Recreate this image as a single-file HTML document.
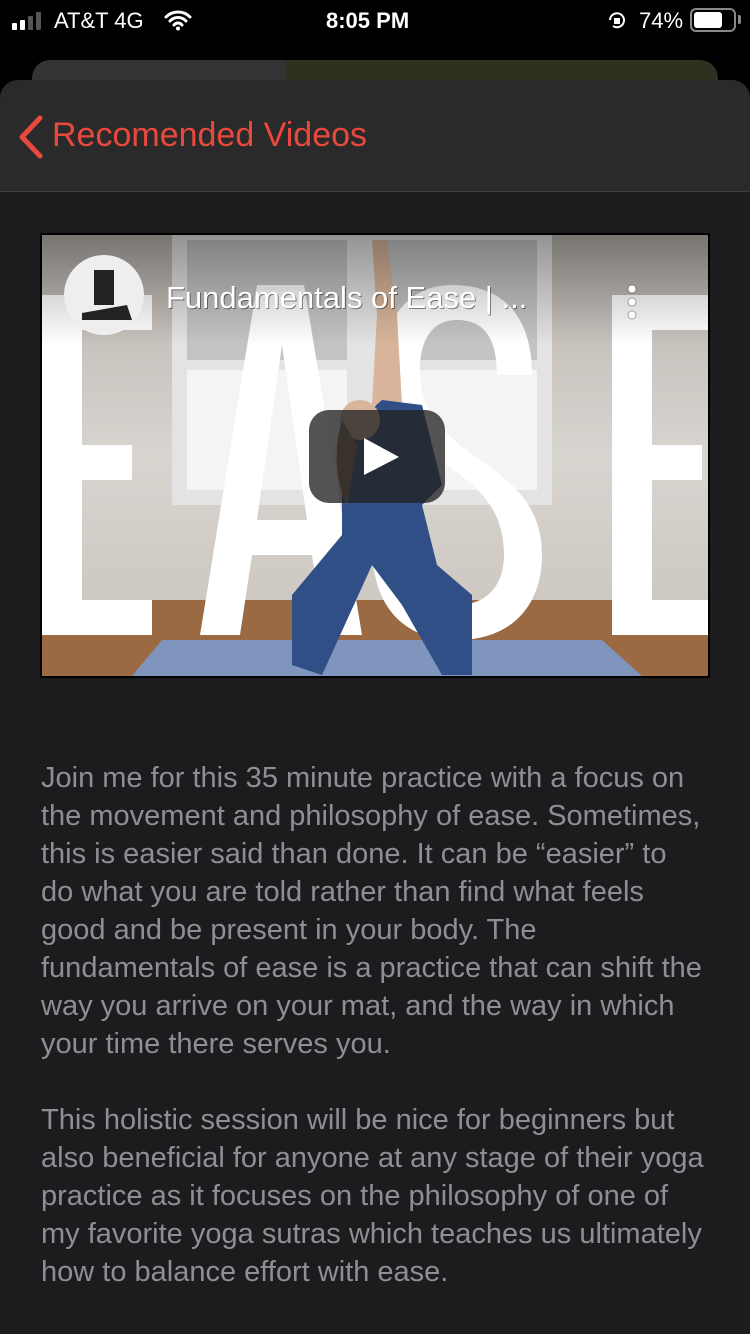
<!DOCTYPE html>
<html><head><meta charset="utf-8"><style>
*{margin:0;padding:0;box-sizing:border-box}
body{width:750px;height:1334px;background:#000;font-family:"Liberation Sans",sans-serif;position:relative;overflow:hidden}
.sb{position:absolute;top:0;left:0;width:750px;height:40px;color:#fff;font-size:22px}
.card{position:absolute;left:32px;top:60px;width:686px;height:60px;border-radius:18px;background:linear-gradient(90deg,#333 0,#333 37%,#2f301f 37%,#2f301f 100%)}
.sheet{position:absolute;left:0;top:80px;width:750px;height:1254px;background:#1c1c1e;border-radius:18px 18px 0 0;overflow:hidden}
.hdr{height:112px;background:#2a2a2a;border-bottom:1px solid #3e3e3e;position:relative}
.hdr .t{position:absolute;left:52px;top:36px;color:#e9493d;font-size:34px}
.txt{position:absolute;left:41px;color:#8f8f93;font-size:29px;line-height:38px;white-space:nowrap}
</style></head><body>
<div class="sb">
 <div style="position:absolute;left:12px;top:12px;display:flex;align-items:flex-end;gap:3px">
  <div style="width:5px;height:7px;background:#fff;border-radius:1px"></div>
  <div style="width:5px;height:10px;background:#fff;border-radius:1px"></div>
  <div style="width:5px;height:14px;background:#555;border-radius:1px"></div>
  <div style="width:5px;height:18px;background:#555;border-radius:1px"></div>
 </div>
 <div style="position:absolute;left:54px;top:8px">AT&amp;T 4G</div>
 <svg style="position:absolute;left:164px;top:9px" width="28" height="22" viewBox="0 0 28 22"><path d="M2 8a17 17 0 0 1 24 0M6 12a11 11 0 0 1 16 0M10 16a5 5 0 0 1 8 0" stroke="#fff" stroke-width="3" fill="none" stroke-linecap="round"/><circle cx="14" cy="19.5" r="2" fill="#fff"/></svg>
 <div style="position:absolute;left:326px;top:8px;font-weight:bold">8:05 PM</div>
 <svg style="position:absolute;left:606px;top:9px" width="22" height="22" viewBox="0 0 22 22"><path d="M4 11a7 7 0 1 1 3 6" stroke="#fff" stroke-width="2" fill="none"/><rect x="8" y="9" width="6" height="6" fill="#fff"/></svg>
 <div style="position:absolute;left:639px;top:8px">74%</div>
 <div style="position:absolute;left:690px;top:8px;width:46px;height:24px;border:2px solid #888;border-radius:6px;padding:2px"><div style="width:28px;height:16px;background:#fff;border-radius:3px"></div></div>
 <div style="position:absolute;left:738px;top:15px;width:3px;height:9px;background:#888;border-radius:0 2px 2px 0"></div>
</div>
<div class="card"></div>
<div class="sheet">
 <div class="hdr">
  <svg style="position:absolute;left:16px;top:34px" width="28" height="46" viewBox="0 0 28 46"><path d="M24 4L6 23l18 19" stroke="#e9493d" stroke-width="5" fill="none" stroke-linecap="round" stroke-linejoin="round"/></svg>
  <div class="t">Recomended Videos</div>
 </div>
 <div style="position:absolute;left:40px;top:153px;width:670px;height:445px;border:2px solid #000;overflow:hidden">
  <svg width="666" height="441" viewBox="0 0 666 441">
   <defs><linearGradient id="bg" x1="0" y1="0" x2="0" y2="1"><stop offset="0" stop-color="#b9b3ad"/><stop offset=".5" stop-color="#d8d4cf"/><stop offset="1" stop-color="#c9c2bb"/></linearGradient>
   <linearGradient id="tg" x1="0" y1="0" x2="0" y2="1"><stop offset="0" stop-color="#000" stop-opacity=".35"/><stop offset="1" stop-color="#000" stop-opacity="0"/></linearGradient></defs>
   <rect width="666" height="441" fill="url(#bg)"/>
   <rect x="130" y="0" width="380" height="270" fill="#e3e3e3"/>
   <rect x="145" y="5" width="160" height="120" fill="#c4c4c4"/>
   <rect x="335" y="5" width="160" height="120" fill="#c4c4c4"/>
   <rect x="145" y="135" width="160" height="120" fill="#f4f4f4"/>
   <rect x="335" y="135" width="160" height="120" fill="#f4f4f4"/>
   <rect x="0" y="365" width="666" height="76" fill="#9b6a43"/>
   <path d="M90 441L120 405H560L600 441Z" fill="#7f95bd"/>
   <g fill="#fff">
    <path d="M0 60H110V95H40V210H90V245H40V365H110V400H0Z"/>
    <path d="M158 400L215 50H262L320 400H282L270 320H210L198 400Z M215 285H265L240 110Z"/>
    <path d="M410 50C460 50 490 80 490 140H455C455 100 440 85 415 85C390 85 378 105 378 135C378 230 500 220 500 320C500 370 470 405 415 405C360 405 330 370 330 310H365C365 350 385 370 415 370C445 370 462 350 462 320C462 220 340 235 340 135C340 80 370 50 410 50Z"/>
    <path d="M570 60H666V95H610V210H660V245H610V365H666V400H570Z"/>
   </g>
   <path d="M330 5L345 5 355 80 360 170 330 170 335 80Z" fill="#d8b59a"/>
   <path d="M300 200L340 165 380 170 400 250 380 270 395 330 430 360 430 440 400 440 360 370 330 330 280 440 250 430 250 360 300 300 300 260Z" fill="#2f4f86"/>
   <circle cx="318" cy="185" r="20" fill="#d8b59a"/>
   <path d="M300 185C290 220 295 250 305 270L315 210Z" fill="#8a6a4a"/>
   <rect width="666" height="110" fill="url(#tg)"/>
   <circle cx="62" cy="60" r="40" fill="#eee"/>
   <path d="M52 35h20v35h-20z M40 78l45-8 5 15h-50z" fill="#222"/>
   <text x="125" y="74" fill="#000" fill-opacity=".45" font-size="31" font-family="Liberation Sans">Fundamentals of Ease | ...</text>
   <text x="124" y="73" fill="#fff" font-size="31" font-family="Liberation Sans">Fundamentals of Ease | ...</text>
   <g fill="#fff" stroke="#0005" stroke-width="1"><circle cx="590" cy="54" r="4"/><circle cx="590" cy="67" r="4"/><circle cx="590" cy="80" r="4"/></g>
   <rect x="267" y="175" width="136" height="93" rx="20" fill="#222" fill-opacity=".78"/>
   <path d="M322 203L357 222 322 240Z" fill="#fff"/>
  </svg>
 </div>
 <div class="txt" style="top:679px">Join me for this 35 minute practice with a focus on<br>the movement and philosophy of ease. Sometimes,<br>this is easier said than done. It can be “easier” to<br>do what you are told rather than find what feels<br>good and be present in your body. The<br>fundamentals of ease is a practice that can shift the<br>way you arrive on your mat, and the way in which<br>your time there serves you.</div>
 <div class="txt" style="top:1021px">This holistic session will be nice for beginners but<br>also beneficial for anyone at any stage of their yoga<br>practice as it focuses on the philosophy of one of<br>my favorite yoga sutras which teaches us ultimately<br>how to balance effort with ease.</div>
</div>
</body></html>
